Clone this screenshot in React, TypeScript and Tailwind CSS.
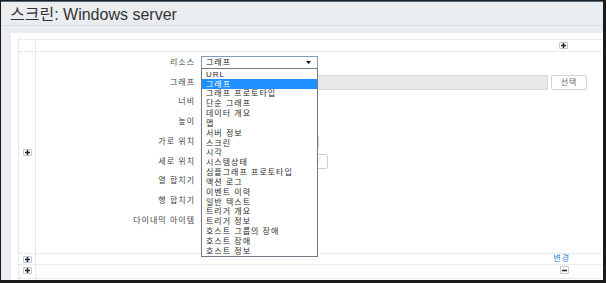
import React from "react";

const F = "font-['Liberation_Sans','Noto_Sans_CJK_KR',sans-serif]";

function PlusBtn() {
  return (
    <div className="w-[9px] h-[7px] border border-[#c3c8cc] rounded-[1px] bg-white flex items-center justify-center">
      <svg width="5" height="5" viewBox="0 0 5 5">
        <path d="M0 2.5H5M2.5 0V5" stroke="#1b2836" strokeWidth="1.5" />
      </svg>
    </div>
  );
}

function MinusBtn() {
  return (
    <div className="w-[9px] h-[8px] border border-[#c3c8cc] rounded-[1px] bg-white flex items-center justify-center">
      <svg width="5" height="5" viewBox="0 0 5 5">
        <path d="M0 2.5H5" stroke="#1b2836" strokeWidth="1.6" />
      </svg>
    </div>
  );
}

const options = [
  "URL",
  "그래프",
  "그래프 프로토타입",
  "단순 그래프",
  "데이터 개요",
  "맵",
  "서버 정보",
  "스크린",
  "시각",
  "시스템상태",
  "심플그래프 프로토타입",
  "액션 로그",
  "이벤트 이력",
  "일반 텍스트",
  "트리거 개요",
  "트리거 정보",
  "호스트 그룹의 장애",
  "호스트 장애",
  "호스트 정보",
];

function Label({ children }: { children: React.ReactNode }) {
  return (
    <div className="h-[19.75px] flex items-center justify-end text-[8px] leading-[10px] tracking-[1px] text-[#454545] whitespace-nowrap">
      {children}
    </div>
  );
}

function Field({ children }: { children?: React.ReactNode }) {
  return <div className="h-[19.75px] flex items-center">{children}</div>;
}

export default function App() {
  return (
    <div className={`w-[606px] h-[283px] bg-[#1b1b1b] pl-[1px] pr-[3px] pb-[3px] pt-[1px] overflow-hidden ${F}`}>
      <div className="h-full bg-[#eaedf0] border-t border-[#4d6a80] flex flex-col">
        <div className="h-[23px] shrink-0 pl-[9px] pt-[5px] text-[16px] leading-[16px] text-[#333]">
          스크린: Windows server
        </div>
        <div className="h-px shrink-0 bg-[#dbdfe3]"></div>
        <div className="h-[7px] shrink-0"></div>
        <div className="flex-1 ml-[10px] bg-white pt-[6px] pl-[7px] pr-[2px]">
          <div className="border-t border-l border-dotted border-[#dadada]">
            {/* row 1 */}
            <div className="flex h-[12px] border-b border-dotted border-[#dadada]">
              <div className="w-[17px] border-r border-dotted border-[#dadada]"></div>
              <div className="flex-1 flex items-center justify-end pr-[33px]">
                <PlusBtn />
              </div>
            </div>
            {/* row 2: form */}
            <div className="flex h-[202px] border-b border-dotted border-[#dadada]">
              <div className="w-[17px] border-r border-dotted border-[#dadada] flex items-center justify-center">
                <PlusBtn />
              </div>
              <div className="flex-1 grid grid-cols-[159px_auto] gap-x-[6px] content-start pt-[1px]">
                <div className="flex flex-col">
                  <Label>리소스</Label>
                  <Label>그래프</Label>
                  <Label>너비</Label>
                  <Label>높이</Label>
                  <Label>가로 위치</Label>
                  <Label>세로 위치</Label>
                  <Label>열 합치기</Label>
                  <Label>행 합치기</Label>
                  <Label>다이내믹 아이템</Label>
                </div>
                <div className="flex flex-col relative">
                  <Field>
                    <div className="relative">
                      <div className="w-[117px] h-[13px] border border-[#7f9dbd] bg-white flex items-center justify-between pl-[4px] pr-[6px] text-[8px] leading-[10px] tracking-[1px] text-[#222]">
                        <span>그래프</span>
                        <svg width="5" height="3" viewBox="0 0 5 3">
                          <path d="M0 0H5L2.5 3Z" fill="#111" />
                        </svg>
                      </div>
                      <div className="absolute left-0 top-[12px] z-10 w-[117px] border border-[#6f7a86] bg-white">
                        {options.map((o, i) => (
                          <div
                            key={i}
                            className={`h-[9.83px] flex items-center text-[8px] leading-[9px] tracking-[1px] pl-[4px] whitespace-nowrap ${
                              i === 1 ? "bg-[#1e90ff] text-white" : "text-[#2a2a2a]"
                            }`}
                          >
                            {o}
                          </div>
                        ))}
                      </div>
                    </div>
                  </Field>
                  <Field>
                    <div className="flex items-center gap-[3px]">
                      <div className="w-[347px] h-[15px] bg-[#e8e8e8] border border-[#dadada]"></div>
                      <div className="w-[36px] h-[15px] border border-[#cfd3d6] rounded-[2px] bg-white flex items-center justify-center text-[8px] leading-[10px] tracking-[1px] text-[#666]">
                        선택
                      </div>
                    </div>
                  </Field>
                  <Field>
                    <div className="w-[70px] h-[14px] border border-[#cfd3d6] bg-white"></div>
                  </Field>
                  <Field>
                    <div className="w-[70px] h-[14px] border border-[#cfd3d6] bg-white"></div>
                  </Field>
                  <Field>
                    <div className="w-[118px] h-[14px] border border-[#cfd3d6] rounded-[2px] bg-white flex">
                      <div className="flex-1"></div>
                      <div className="flex-1 border-l border-[#cfd3d6]"></div>
                      <div className="flex-1 border-l border-[#cfd3d6]"></div>
                    </div>
                  </Field>
                  <Field>
                    <div className="w-[127px] h-[15px] border border-[#cfd3d6] rounded-[2px] bg-white flex">
                      <div className="flex-1"></div>
                      <div className="flex-1 border-l border-[#cfd3d6]"></div>
                      <div className="flex-1 border-l border-[#cfd3d6] flex items-center justify-end pr-[8px] text-[8px] leading-[10px] text-[#666]">
                        중
                      </div>
                    </div>
                  </Field>
                  <Field>
                    <div className="w-[40px] h-[14px] border border-[#cfd3d6] bg-white"></div>
                  </Field>
                  <Field>
                    <div className="w-[40px] h-[14px] border border-[#cfd3d6] bg-white"></div>
                  </Field>
                  <Field>
                    <div className="w-[10px] h-[10px] border border-[#cfd3d6] bg-white"></div>
                  </Field>
                </div>
              </div>
            </div>
            {/* row 3 */}
            <div className="flex h-[11px] border-b border-dotted border-[#dadada]">
              <div className="w-[17px] border-r border-dotted border-[#dadada] flex items-center justify-center">
                <PlusBtn />
              </div>
              <div className="flex-1 flex items-center justify-end pr-[31px] text-[8px] leading-[10px] tracking-[1px] text-[#2f7fd0]">
                변경
              </div>
            </div>
            {/* row 4 */}
            <div className="flex h-[14px] border-b border-dotted border-[#dadada]">
              <div className="w-[17px] border-r border-dotted border-[#dadada] flex items-start pt-[2px] justify-center">
                <PlusBtn />
              </div>
              <div className="flex-1 flex items-start pt-[1px] justify-end pr-[32px]">
                <MinusBtn />
              </div>
            </div>
          </div>
        </div>
      </div>
    </div>
  );
}
